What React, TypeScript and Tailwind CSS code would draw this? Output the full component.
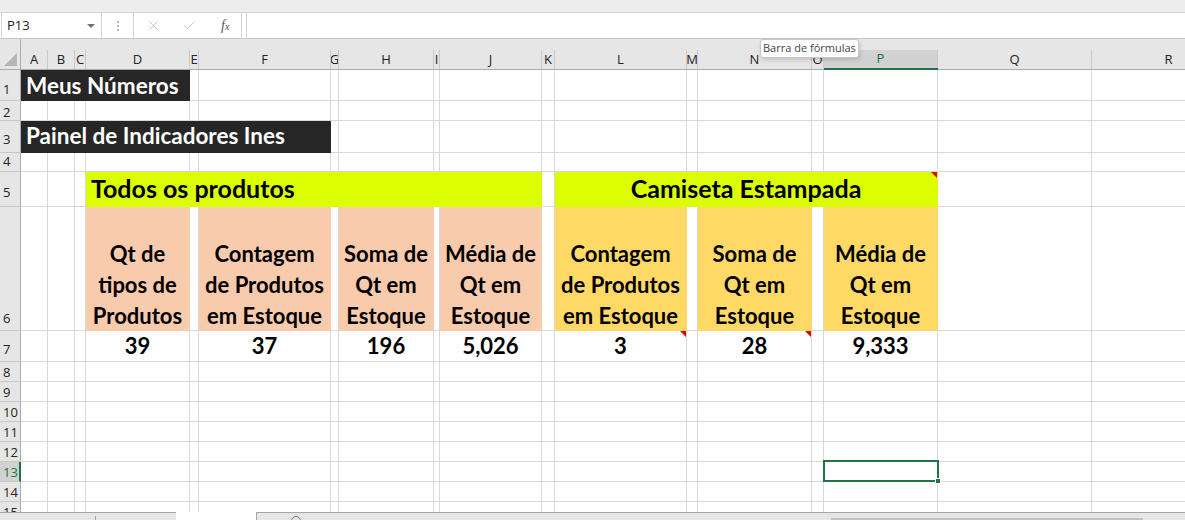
import type { ReactNode } from "react";
import { X, Check } from "lucide-react";

const COLUMNS = ["A", "B", "C", "D", "E", "F", "G", "H", "I", "J", "K", "L", "M", "N", "O", "P", "Q", "R"];

type Fill = "none" | "dark" | "lime" | "peach" | "gold";

interface Cell {
  span?: 1 | 4 | 5 | 6 | 7;
  fill?: Fill;
  content?: ReactNode;
  note?: boolean;
}

const SPAN: Record<number, string> = {
  1: "",
  4: "col-span-4",
  5: "col-span-5",
  6: "col-span-6",
  7: "col-span-7",
};

const FILL: Record<Fill, string> = {
  none: "bg-white border-[#d9d9d9]",
  dark: "bg-[#262626] border-[#262626] text-white",
  lime: "bg-[#dbff00] border-[#dbff00]",
  peach: "bg-[#f8cbad] border-[#f8cbad]",
  gold: "bg-[#ffd966] border-[#ffd966]",
};

const ROW_PAD = ["pb-[4px]", "pb-[1px]", "pb-[6px]", "pb-[3px]", "pb-[7px]", "pb-[5px]", "pb-[5px]"];

const plain = (n: number): Cell[] => Array.from({ length: n }, () => ({}));

function Title({ children, className = "" }: { children: ReactNode; className?: string }) {
  return (
    <span className={`self-end whitespace-nowrap pl-[5px] text-[22.5px] font-bold leading-[1.2] ${className}`}>
      {children}
    </span>
  );
}

function Header({ lines }: { lines: string[] }) {
  return (
    <div className="mb-[-1px] flex w-full flex-col items-center self-end text-[22px] font-bold leading-[31px] text-black">
      {lines.map((l) => (
        <span key={l} className="whitespace-nowrap">
          {l}
        </span>
      ))}
    </div>
  );
}

function Value({ children }: { children: ReactNode }) {
  return (
    <span className="w-full self-end pb-[2px] text-center text-[22px] font-bold leading-[1.2] text-black">
      {children}
    </span>
  );
}

const ROWS: Cell[][] = [
  [{ span: 4, fill: "dark", content: <Title className="pb-[1px]">Meus Números</Title> }, ...plain(14)],
  plain(18),
  [{ span: 6, fill: "dark", content: <Title className="pb-[3px]">Painel de Indicadores Ines</Title> }, ...plain(12)],
  plain(18),
  [
    ...plain(3),
    {
      span: 7,
      fill: "lime",
      content: (
        <span className="self-end whitespace-nowrap pb-[3px] pl-[5px] text-[25px] font-bold leading-[1.2] text-black">
          Todos os produtos
        </span>
      ),
    },
    {},
    {
      span: 5,
      fill: "lime",
      note: true,
      content: (
        <span className="w-full self-end whitespace-nowrap pb-[3px] text-center text-[25px] font-bold leading-[1.2] text-black">
          Camiseta Estampada
        </span>
      ),
    },
    ...plain(2),
  ],
  [
    ...plain(3),
    { fill: "peach", content: <Header lines={["Qt de", "tipos de", "Produtos"]} /> },
    {},
    { fill: "peach", content: <Header lines={["Contagem", "de Produtos", "em Estoque"]} /> },
    {},
    { fill: "peach", content: <Header lines={["Soma de", "Qt em", "Estoque"]} /> },
    {},
    { fill: "peach", content: <Header lines={["Média de", "Qt em", "Estoque"]} /> },
    {},
    { fill: "gold", content: <Header lines={["Contagem", "de Produtos", "em Estoque"]} /> },
    {},
    { fill: "gold", content: <Header lines={["Soma de", "Qt em", "Estoque"]} /> },
    {},
    { fill: "gold", content: <Header lines={["Média de", "Qt em", "Estoque"]} /> },
    ...plain(2),
  ],
  [
    ...plain(3),
    { content: <Value>39</Value> },
    {},
    { content: <Value>37</Value> },
    {},
    { content: <Value>196</Value> },
    {},
    { content: <Value>5,026</Value> },
    {},
    { content: <Value>3</Value>, note: true },
    {},
    { content: <Value>28</Value>, note: true },
    {},
    { content: <Value>9,333</Value> },
    ...plain(2),
  ],
  plain(18),
  plain(18),
  plain(18),
  plain(18),
  plain(18),
  plain(18),
  plain(18),
  plain(18),
];

function NoteMark() {
  return (
    <svg className="absolute right-0 top-0 h-[6px] w-[6px]" viewBox="0 0 6 6">
      <polygon points="0,0 6,0 6,6" fill="#e00000" />
    </svg>
  );
}

function FormulaBar() {
  return (
    <div className="flex h-[25px] items-stretch bg-white font-['Open_Sans',sans-serif]">
      <div className="ml-px flex w-[101px] items-center justify-between border-x border-[#d4d4d4] pl-[5px] pr-[6px] text-[13px] text-[#222]">
        <span>P13</span>
        <svg className="h-[4px] w-[8px]" viewBox="0 0 8 4">
          <polygon points="0,0 8,0 4,4" fill="#6f6f6f" />
        </svg>
      </div>
      <div className="flex w-[31px] flex-col items-center justify-center gap-[2px]">
        <span className="h-[2px] w-[2px] bg-[#b5b5b5]" />
        <span className="h-[2px] w-[2px] bg-[#b5b5b5]" />
        <span className="h-[2px] w-[2px] bg-[#b5b5b5]" />
      </div>
      <div className="flex w-[109px] items-center border-x border-[#d4d4d4]">
        <X className="ml-[12px] h-[15px] w-[15px] text-[#bdbdbd]" strokeWidth={1.5} />
        <Check className="ml-[21px] h-[15px] w-[15px] text-[#bdbdbd]" strokeWidth={1.5} />
        <span className="ml-[24px] font-['Liberation_Serif',serif] text-[14px] italic text-[#555]">
          f<span className="text-[10px]">x</span>
        </span>
      </div>
      <div className="ml-[4px] flex-1 border-l border-[#d4d4d4]" />
    </div>
  );
}

function Sheet() {
  return (
    <div className="grid h-[474px] grid-cols-[21px_27px_27px_11px_104px_9px_132px_8px_95px_6px_102px_13px_132px_11px_114px_12px_114px_154px_154px] grid-rows-[31px_31px_20px_32px_19px_35px_124px_31px_20px_20px_20px_20px_20px_20px_20px_20px] overflow-hidden border-t border-[#c6c6c6]">
      {/* column headings */}
      <div className="flex items-end justify-end border-b border-r border-[#ababab] bg-[#e6e6e6] pb-[3px] pr-[3px]">
        <svg className="h-[13px] w-[13px]" viewBox="0 0 13 13">
          <polygon points="13,0 13,13 0,13" fill="#b6b6b6" />
        </svg>
      </div>
      {COLUMNS.map((c) =>
        c === "P" ? (
          <div key={c} className="flex flex-col justify-end border-b-2 border-[#217346] bg-[#e6e6e6]">
            <div className="flex h-[18px] items-center justify-center overflow-hidden border-r border-[#c9c9c9] bg-[#d2d2d2] font-['Open_Sans',sans-serif] text-[13px] text-[#217346]">
              {c}
            </div>
          </div>
        ) : (
          <div key={c} className="flex flex-col justify-end border-b border-[#ababab] bg-[#e6e6e6]">
            <div className="flex h-[19px] items-center justify-center overflow-hidden border-r border-[#c9c9c9] font-['Open_Sans',sans-serif] text-[13px] text-[#222]">
              {c}
            </div>
          </div>
        ),
      )}

      {ROWS.map((row, r) => {
        const num = r + 1;
        const pad = ROW_PAD[r] ?? "pb-[2px]";
        return [
          num === 13 ? (
            <div
              key={`h${num}`}
              className="flex items-end border-b border-r-2 border-b-[#c8c8c8] border-r-[#217346] bg-[#d2d2d2] pb-[2px] pl-[3px] font-['Open_Sans',sans-serif] text-[13px] leading-none text-[#217346]"
            >
              {num}
            </div>
          ) : (
            <div
              key={`h${num}`}
              className={`flex items-end border-b border-r border-b-[#c8c8c8] border-r-[#ababab] bg-[#e6e6e6] pl-[3px] font-['Open_Sans',sans-serif] text-[13px] leading-none text-[#222] ${pad}`}
            >
              {num}
            </div>
          ),
          ...row.map((cell, i) => (
            <div
              key={`${num}-${i}`}
              className={`relative flex min-w-0 overflow-hidden border-b border-r font-['Lato',sans-serif] ${SPAN[cell.span ?? 1]} ${FILL[cell.fill ?? "none"]}`}
            >
              {cell.content}
              {cell.note && <NoteMark />}
            </div>
          )),
        ];
      })}
    </div>
  );
}

function SelectionBox() {
  // P13 active cell outline with fill handle
  return (
    <div className="pointer-events-none absolute left-[823px] top-[460px] h-[22px] w-[116px] border-2 border-[#217346]">
      <div className="absolute -bottom-[4px] -right-[4px] h-[6px] w-[6px] border border-white bg-[#217346]" />
    </div>
  );
}

export default function App() {
  return (
    <div className="relative h-[520px] w-[1185px] overflow-hidden bg-white">
      <div className="h-[13px] border-b border-[#d2d2d2] bg-[#ededed]" />
      <FormulaBar />
      <Sheet />
      <div className="flex h-[8px]">
        <div className="flex w-[176px] border-t border-[#a5a5a5] bg-[#e6e6e6]">
          <div className="mt-[3px] w-[96px] border-r border-[#a5a5a5]" />
        </div>
        <div className="w-[80px] bg-white" />
        <div className="relative flex-1 border-l border-t border-[#a5a5a5] bg-[#e6e6e6]">
          <div className="absolute left-[34px] top-[3px] h-[10px] w-[10px] rounded-full border border-[#777]" />
          <div className="absolute left-[574px] top-[5px] h-[4px] w-[312px] bg-[#c2c2c2]" />
        </div>
      </div>
      <SelectionBox />
      <div className="absolute left-[760px] top-[39px] flex h-[19px] items-center rounded-[3px] border border-[#c6c6c6] bg-white px-[2px] font-['Open_Sans',sans-serif] text-[11px] text-[#444] shadow-[1px_2px_4px_rgba(0,0,0,0.15)]">
        Barra de fórmulas
      </div>
    </div>
  );
}
